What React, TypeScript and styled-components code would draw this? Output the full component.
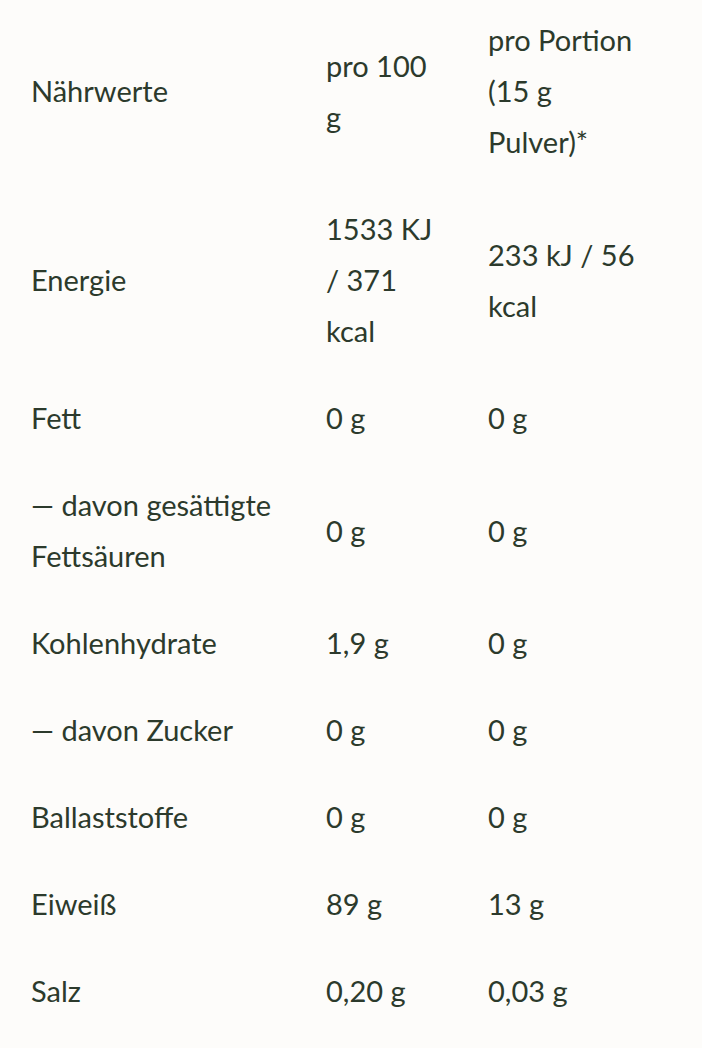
import { createGlobalStyle } from "styled-components"
import styled from "styled-components"

type Row = {
    label: string[]
    per100: string[]
    portion: string[]
}

const rows: Row[] = [
    { label: ["Energie"], per100: ["1533 KJ", "/ 371", "kcal"], portion: ["233 kJ / 56", "kcal"] },
    { label: ["Fett"], per100: ["0 g"], portion: ["0 g"] },
    { label: ["— davon gesättigte", "Fettsäuren"], per100: ["0 g"], portion: ["0 g"] },
    { label: ["Kohlenhydrate"], per100: ["1,9 g"], portion: ["0 g"] },
    { label: ["— davon Zucker"], per100: ["0 g"], portion: ["0 g"] },
    { label: ["Ballaststoffe"], per100: ["0 g"], portion: ["0 g"] },
    { label: ["Eiweiß"], per100: ["89 g"], portion: ["13 g"] },
    { label: ["Salz"], per100: ["0,20 g"], portion: ["0,03 g"] },
]

function Lines({ lines }: { lines: string[] }) {
    return (
        <>
            {lines.map((l, i) => (
                <span key={i}>
                    {l}
                    {i < lines.length - 1 && <br />}
                </span>
            ))}
        </>
    )
}

export default function App() {
    return (
        <>
            <GlobalStyle />
            <Page>
                <Table>
                    <colgroup>
                        <Col $width={295} />
                        <Col $width={162} />
                        <Col />
                    </colgroup>
                    <tbody>
                        <tr>
                            <Cell><Lines lines={["Nährwerte"]} /></Cell>
                            <Cell><Lines lines={["pro 100", "g"]} /></Cell>
                            <Cell><Lines lines={["pro Portion", "(15 g", "Pulver)*"]} /></Cell>
                        </tr>
                        {rows.map((r, i) => (
                            <tr key={i}>
                                <Cell><Lines lines={r.label} /></Cell>
                                <Cell><Lines lines={r.per100} /></Cell>
                                <Cell><Lines lines={r.portion} /></Cell>
                            </tr>
                        ))}
                    </tbody>
                </Table>
            </Page>
        </>
    )
}

const GlobalStyle = createGlobalStyle`
    html, body {
        margin: 0;
        padding: 0;
        background: #fdfcfa;
    }
`

const Page = styled.div`
    padding: 0 11px;
    margin-top: -4px;
    font-family: Lato, "Noto Sans", sans-serif;
    color: #2c3a2c;
`

const Table = styled.table`
    width: 680px;
    border-collapse: collapse;
    table-layout: fixed;
`

const Col = styled.col<{ $width?: number }>`
    width: ${p => (p.$width ? `${p.$width}px` : "auto")};
`

const Cell = styled.td`
    padding: 18px 20px;
    font-size: 29px;
    line-height: 51px;
    vertical-align: middle;
    white-space: nowrap;
`
